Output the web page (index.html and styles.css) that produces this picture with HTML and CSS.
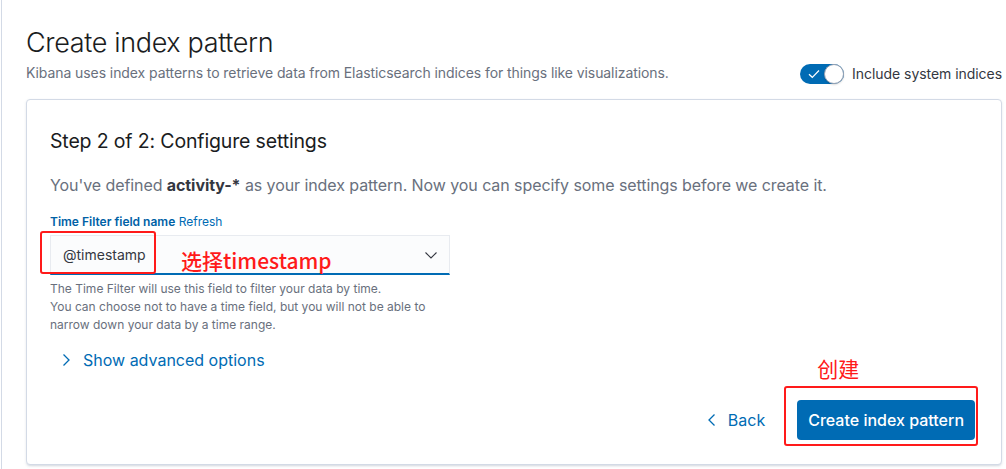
FILE: index.html
```html
<!DOCTYPE html>
<html lang="en">
<head>
<meta charset="utf-8">
<title>Create index pattern</title>
<link rel="stylesheet" href="styles.css">
</head>
<body>
<div class="page">
  <header class="header">
    <div class="header-text">
      <h1 class="title">Create index pattern</h1>
      <p class="subtitle">Kibana uses index patterns to retrieve data from Elasticsearch indices for things like visualizations.</p>
    </div>
    <label class="switch">
      <span class="switch-track">
        <svg class="switch-check" viewBox="0 0 12 10" width="12" height="10"><path d="M1 5.2 L4.3 8.3 L11 1.5" fill="none" stroke="#fff" stroke-width="1.2"/></svg>
        <span class="switch-knob"></span>
      </span>
      <span class="switch-label">Include system indices</span>
    </label>
  </header>

  <section class="card">
    <h2 class="step-title">Step 2 of 2: Configure settings</h2>
    <p class="step-desc">You've defined <strong>activity-*</strong> as your index pattern. Now you can specify some settings before we create it.</p>

    <div class="field">
      <div class="field-label"><span class="label-name">Time Filter field name</span> <span class="label-link">Refresh</span></div>
      <div class="select">
        <span class="select-value">@timestamp</span>
        <svg class="select-arrow" viewBox="0 0 16 16" width="16" height="16"><path d="M2.5 5.5 L8 11 L13.5 5.5" fill="none" stroke="#343741" stroke-width="1.1"/></svg>
        <span class="mark mark-select"></span>
        <span class="note note-select">选择timestamp</span>
      </div>
      <p class="help">The Time Filter will use this field to filter your data by time.<br>You can choose not to have a time field, but you will not be able to<br>narrow down your data by a time range.</p>
    </div>

    <div class="advanced">
      <svg class="adv-arrow" viewBox="0 0 16 16" width="16" height="16"><path d="M5.5 2.5 L11 8 L5.5 13.5" fill="none" stroke="#006bb4" stroke-width="1.3"/></svg>
      <span>Show advanced options</span>
    </div>

    <div class="actions">
      <button class="btn-back" type="button">
        <svg viewBox="0 0 16 16" width="16" height="16"><path d="M10.5 2.5 L5 8 L10.5 13.5" fill="none" stroke="#006bb4" stroke-width="1.3"/></svg>
        <span>Back</span>
      </button>
      <div class="btn-wrap">
        <span class="note note-create">创建</span>
        <button class="btn-primary" type="button">Create index pattern</button>
        <span class="mark mark-btn"></span>
      </div>
    </div>
  </section>
</div>
</body>
</html>
```

FILE: styles.css
```css
* { box-sizing: border-box; }
html, body { margin: 0; padding: 0; background: #fff; }
body {
  font-family: Inter, "Noto Sans", "Noto Sans CJK SC", sans-serif;
  color: #343741;
  width: 1006px;
  height: 469px;
  overflow: hidden;
}
.page {
  margin-left: 1px;
  border-left: 1px solid #d3dae6;
  padding: 0 4px 0 24px;
  height: 469px;
}
.header {
  display: flex;
  justify-content: space-between;
  align-items: flex-end;
  padding-top: 26px;
}
.title {
  margin: 0;
  font-size: 27px;
  font-weight: 300;
  line-height: 34px;
  color: #1a1c21;
  letter-spacing: -0.35px;
}
.subtitle {
  margin: 3px 0 0;
  font-size: 14px;
  line-height: 20px;
  color: #69707d;
  letter-spacing: -0.08px;
}
.switch {
  display: flex;
  align-items: center;
  gap: 8px;
  margin-bottom: -1px;
}
.switch-track {
  position: relative;
  display: block;
  width: 44px;
  height: 20px;
  border-radius: 10px;
  background: #006bb4;
}
.switch-check {
  position: absolute;
  left: 8px;
  top: 5px;
}
.switch-knob {
  position: absolute;
  right: 0;
  top: 0;
  width: 20px;
  height: 20px;
  border-radius: 50%;
  background: #fff;
  border: 1px solid #98a2b3;
  box-shadow: 0 1px 2px rgba(0,0,0,0.15);
}
.switch-label {
  font-size: 14px;
  line-height: 20px;
  color: #343741;
  letter-spacing: -0.05px;
}
.card {
  position: relative;
  margin-top: 16px;
  height: 366px;
  border: 1px solid #d3dae6;
  border-radius: 4px;
  box-shadow: 0 1px 3px rgba(152,162,179,0.2), 0 2px 2px -1px rgba(152,162,179,0.25);
  padding: 27px 23px 0;
  background: #fff;
}
.step-title {
  margin: 0;
  font-size: 19.5px;
  font-weight: 400;
  line-height: 28px;
  color: #1a1c21;
  letter-spacing: -0.15px;
}
.step-desc {
  margin: 18px 0 0;
  font-size: 16px;
  line-height: 24px;
  color: #69707d;
  letter-spacing: -0.08px;
}
.step-desc strong { color: #343741; font-weight: 700; }
.field { margin-top: 16px; width: 400px; }
.field-label {
  font-size: 12px;
  line-height: 18px;
  margin-bottom: 4px;
}
.label-name { font-weight: 600; color: #0061a6; }
.label-link { color: #006bb4; }
.select {
  position: relative;
  height: 40px;
  background: #fbfcfd;
  border: 1px solid #e8ebf0;
  border-bottom: 2px solid #006bb4;
  display: flex;
  align-items: center;
  padding: 0 12px;
  justify-content: space-between;
}
.select-value { font-size: 14px; color: #343741; }
.select-arrow { margin-right: -2px; }
.mark {
  position: absolute;
  border: 2px solid #ff1a1a;
  border-radius: 3px;
}
.mark-select { left: -11px; top: -5px; width: 116px; height: 43px; }
.note {
  position: absolute;
  color: #ff1a1a;
  font-family: "Noto Sans CJK SC", "Noto Sans", sans-serif;
  font-size: 21px;
  line-height: 26px;
  white-space: nowrap;
}
.note-select { left: 130px; top: 11px; font-weight: 500; }
.help {
  margin: 5px 0 0;
  font-size: 12px;
  line-height: 18px;
  color: #69707d;
}
.advanced {
  display: flex;
  align-items: center;
  gap: 9px;
  margin-top: 14px;
  margin-left: 8px;
  font-size: 16px;
  line-height: 24px;
  color: #006bb4;
}
.actions {
  position: absolute;
  right: 26px;
  bottom: 24px;
  display: flex;
  align-items: center;
  gap: 32px;
}
.note-create { left: 20px; top: -45px; }
.btn-back {
  display: flex;
  align-items: center;
  gap: 8px;
  background: none;
  border: 0;
  padding: 0;
  font-family: inherit;
  font-size: 16px;
  color: #006bb4;
}
.btn-wrap { position: relative; }
.btn-primary {
  display: block;
  height: 40px;
  padding: 0 11px;
  border: 0;
  border-radius: 4px;
  background: #006bb4;
  color: #fff;
  font-family: inherit;
  font-size: 16px;
  font-weight: 500;
}
.mark-btn { left: -13px; top: -14px; right: -3px; bottom: -6px; }
```
